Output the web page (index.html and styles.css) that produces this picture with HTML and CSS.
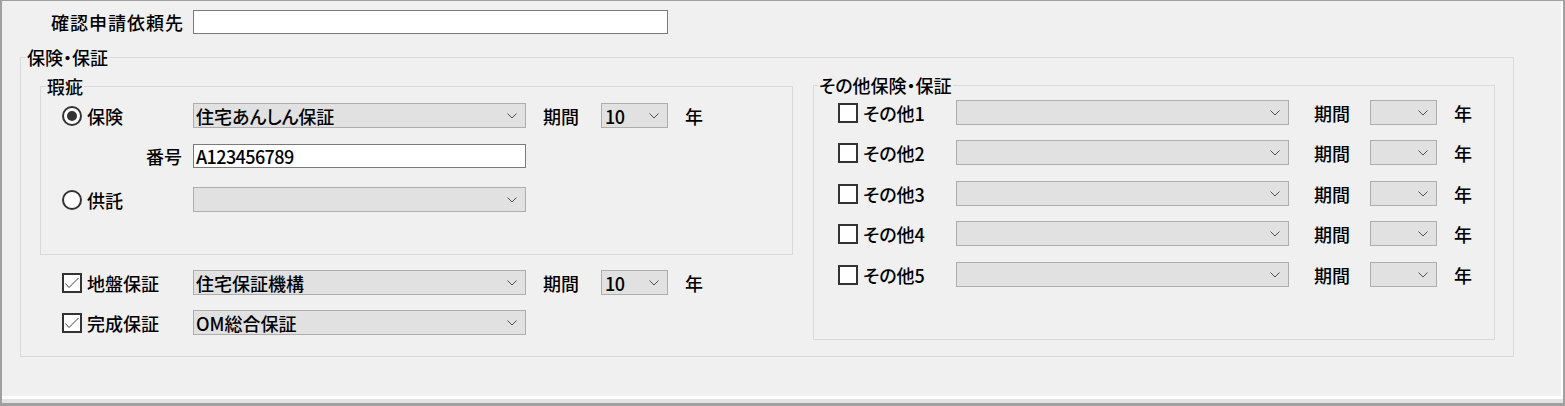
FILE: index.html
```html
<!DOCTYPE html>
<html lang="ja">
<head>
<meta charset="utf-8">
<title>保険・保証</title>
<link rel="stylesheet" href="styles.css">
</head>
<body>
<div class="window">
  <div class="panel">
    <div class="top-row">
      <span class="top-label">確認申請依頼先</span>
      <div class="textbox wide"></div>
    </div>
    <fieldset class="group outer">
      <legend>保険・保証</legend>
      <div class="outer-body">
        <div class="left-col">
          <fieldset class="group kashi">
            <legend>瑕疵</legend>
            <div class="kashi-body">
              <div class="row">
                <div class="lead"><span class="radio checked"></span><span>保険</span></div>
                <div class="combo"><span>住宅あんしん保証</span><svg class="chev" width="10" height="6" viewBox="0 0 10 6"><path d="M0.5 0.5 L5 5 L9.5 0.5" fill="none" stroke="#505050" stroke-width="1"/></svg></div>
                <span class="period">期間</span>
                <div class="combo short"><span class="latin">10</span><svg class="chev" width="10" height="6" viewBox="0 0 10 6"><path d="M0.5 0.5 L5 5 L9.5 0.5" fill="none" stroke="#505050" stroke-width="1"/></svg></div>
                <span class="year">年</span>
              </div>
              <div class="row r2">
                <div class="lead right">番号</div>
                <div class="textbox mid"><span class="latin">A123456789</span></div>
              </div>
              <div class="row r3">
                <div class="lead"><span class="radio"></span><span>供託</span></div>
                <div class="combo"><span></span><svg class="chev" width="10" height="6" viewBox="0 0 10 6"><path d="M0.5 0.5 L5 5 L9.5 0.5" fill="none" stroke="#505050" stroke-width="1"/></svg></div>
              </div>
            </div>
          </fieldset>
          <div class="left-rows">
            <div class="row">
              <div class="lead"><span class="check"><svg width="16" height="16" viewBox="0 0 16 16"><path d="M1.5 8.5 L5 12.5 L14.5 3" fill="none" stroke="#444" stroke-width="1"/></svg></span><span>地盤保証</span></div>
              <div class="combo"><span>住宅保証機構</span><svg class="chev" width="10" height="6" viewBox="0 0 10 6"><path d="M0.5 0.5 L5 5 L9.5 0.5" fill="none" stroke="#505050" stroke-width="1"/></svg></div>
              <span class="period">期間</span>
              <div class="combo short"><span class="latin">10</span><svg class="chev" width="10" height="6" viewBox="0 0 10 6"><path d="M0.5 0.5 L5 5 L9.5 0.5" fill="none" stroke="#505050" stroke-width="1"/></svg></div>
              <span class="year">年</span>
            </div>
            <div class="row">
              <div class="lead"><span class="check"><svg width="16" height="16" viewBox="0 0 16 16"><path d="M1.5 8.5 L5 12.5 L14.5 3" fill="none" stroke="#444" stroke-width="1"/></svg></span><span>完成保証</span></div>
              <div class="combo"><span>OM総合保証</span><svg class="chev" width="10" height="6" viewBox="0 0 10 6"><path d="M0.5 0.5 L5 5 L9.5 0.5" fill="none" stroke="#505050" stroke-width="1"/></svg></div>
            </div>
          </div>
        </div>
        <fieldset class="group other">
          <legend>その他保険・保証</legend>
          <div class="other-body">
            <div class="orow">
              <div class="olead"><span class="check"></span><span>その他1</span></div>
              <div class="combo"><span></span><svg class="chev" width="10" height="6" viewBox="0 0 10 6"><path d="M0.5 0.5 L5 5 L9.5 0.5" fill="none" stroke="#505050" stroke-width="1"/></svg></div>
              <span class="period o">期間</span>
              <div class="combo short"><span></span><svg class="chev" width="10" height="6" viewBox="0 0 10 6"><path d="M0.5 0.5 L5 5 L9.5 0.5" fill="none" stroke="#505050" stroke-width="1"/></svg></div>
              <span class="year">年</span>
            </div>
            <div class="orow">
              <div class="olead"><span class="check"></span><span>その他2</span></div>
              <div class="combo"><span></span><svg class="chev" width="10" height="6" viewBox="0 0 10 6"><path d="M0.5 0.5 L5 5 L9.5 0.5" fill="none" stroke="#505050" stroke-width="1"/></svg></div>
              <span class="period o">期間</span>
              <div class="combo short"><span></span><svg class="chev" width="10" height="6" viewBox="0 0 10 6"><path d="M0.5 0.5 L5 5 L9.5 0.5" fill="none" stroke="#505050" stroke-width="1"/></svg></div>
              <span class="year">年</span>
            </div>
            <div class="orow">
              <div class="olead"><span class="check"></span><span>その他3</span></div>
              <div class="combo"><span></span><svg class="chev" width="10" height="6" viewBox="0 0 10 6"><path d="M0.5 0.5 L5 5 L9.5 0.5" fill="none" stroke="#505050" stroke-width="1"/></svg></div>
              <span class="period o">期間</span>
              <div class="combo short"><span></span><svg class="chev" width="10" height="6" viewBox="0 0 10 6"><path d="M0.5 0.5 L5 5 L9.5 0.5" fill="none" stroke="#505050" stroke-width="1"/></svg></div>
              <span class="year">年</span>
            </div>
            <div class="orow">
              <div class="olead"><span class="check"></span><span>その他4</span></div>
              <div class="combo"><span></span><svg class="chev" width="10" height="6" viewBox="0 0 10 6"><path d="M0.5 0.5 L5 5 L9.5 0.5" fill="none" stroke="#505050" stroke-width="1"/></svg></div>
              <span class="period o">期間</span>
              <div class="combo short"><span></span><svg class="chev" width="10" height="6" viewBox="0 0 10 6"><path d="M0.5 0.5 L5 5 L9.5 0.5" fill="none" stroke="#505050" stroke-width="1"/></svg></div>
              <span class="year">年</span>
            </div>
            <div class="orow">
              <div class="olead"><span class="check"></span><span>その他5</span></div>
              <div class="combo"><span></span><svg class="chev" width="10" height="6" viewBox="0 0 10 6"><path d="M0.5 0.5 L5 5 L9.5 0.5" fill="none" stroke="#505050" stroke-width="1"/></svg></div>
              <span class="period o">期間</span>
              <div class="combo short"><span></span><svg class="chev" width="10" height="6" viewBox="0 0 10 6"><path d="M0.5 0.5 L5 5 L9.5 0.5" fill="none" stroke="#505050" stroke-width="1"/></svg></div>
              <span class="year">年</span>
            </div>
          </div>
        </fieldset>
      </div>
    </fieldset>
  </div>
  <div class="strip"></div>
</div>
</body>
</html>
```

FILE: styles.css
```css
* {
  box-sizing: border-box;
}

body {
  margin: 0;
  background: #f0f0f0;
  font-family: "Noto Sans CJK JP", "Noto Sans CJK SC", sans-serif;
  font-size: 18px;
  font-weight: 500;
  line-height: 20px;
  color: #000;
  font-feature-settings: "palt";
}

.window {
  width: 1565px;
  height: 406px;
  border-style: solid;
  border-color: #a0a0a0;
  border-width: 1px 2px 3px 2px;
  display: flex;
  flex-direction: column;
}

.panel {
  flex: 1;
  border-right: 2px solid #fff;
  border-bottom: 3px solid #fff;
}

.strip {
  flex: none;
  height: 4px;
  background: #e3e3e3;
}

.top-row {
  display: flex;
  align-items: center;
  height: 24px;
  margin-top: 9px;
}

.top-label {
  width: 182px;
  text-align: right;
  letter-spacing: 1px;
}

.textbox {
  flex: none;
  height: 24px;
  background: #fff;
  border: 1px solid #7a7a7a;
  padding-left: 2px;
  display: flex;
  align-items: center;
}

.textbox.wide {
  width: 475px;
  margin-left: 9px;
}

.textbox.mid {
  width: 333px;
}

.latin {
  letter-spacing: -0.6px;
}

.group {
  margin: 0;
  padding: 0;
  border: 1px solid #d9d9d9;
  min-width: 0;
}

.group > legend {
  padding: 0 1px;
  line-height: 20px;
}

.outer {
  margin: 13px 0 0 18px;
  width: 1494px;
  height: 310px;
}

.outer > legend {
  margin-left: 5px;
}

.outer-body {
  display: flex;
  align-items: flex-start;
  gap: 20px;
  padding: 8px 0 0 19px;
}

.left-col {
  flex: none;
  width: 753px;
  margin-top: 1px;
}

.kashi {
  width: 753px;
  height: 179px;
}

.kashi > legend {
  margin-left: 5px;
}

.kashi-body {
  padding-top: 7px;
}

.row {
  display: flex;
  align-items: center;
  height: 25px;
}

.kashi-body .r2 {
  margin-top: 15px;
}

.kashi-body .r3 {
  margin-top: 19px;
}

.left-rows {
  padding-left: 1px;
}

.left-rows .row {
  margin-top: 15px;
}

.lead {
  flex: none;
  width: 152px;
  display: flex;
  align-items: center;
  padding-left: 21px;
}

.lead.right {
  justify-content: flex-end;
  padding-right: 11px;
}

.radio {
  flex: none;
  width: 20px;
  height: 20px;
  border: 2px solid #333;
  border-radius: 50%;
  background: #fff;
  margin-right: 5px;
  display: flex;
  align-items: center;
  justify-content: center;
}

.radio.checked::after {
  content: "";
  width: 10px;
  height: 10px;
  border-radius: 50%;
  background: #333;
}

.check {
  flex: none;
  width: 20px;
  height: 20px;
  border: 2px solid #333;
  background: #fff;
  margin-right: 5px;
  display: flex;
}

.combo {
  flex: none;
  width: 333px;
  height: 25px;
  background: #e1e1e1;
  border: 1px solid #adadad;
  display: flex;
  align-items: center;
  justify-content: space-between;
  padding: 0 8px 0 2px;
}

.combo.short {
  width: 67px;
  padding-left: 3px;
}

.chev {
  flex: none;
}

.period {
  flex: none;
  width: 36px;
  margin: 0 22px 0 17px;
}

.period.o {
  margin: 0 20px 0 25px;
}

.year {
  margin-left: 17px;
}

.other {
  flex: none;
  width: 682px;
  height: 265px;
}

.other > legend {
  margin-left: 4px;
}

.other-body {
  padding: 5px 0 0 24px;
}

.orow {
  display: flex;
  align-items: center;
  height: 25px;
}

.orow + .orow {
  margin-top: 15px;
}

.orow:nth-child(3),
.orow:nth-child(5) {
  margin-top: 16px;
}

.olead {
  flex: none;
  width: 118px;
  display: flex;
  align-items: center;
}
```
